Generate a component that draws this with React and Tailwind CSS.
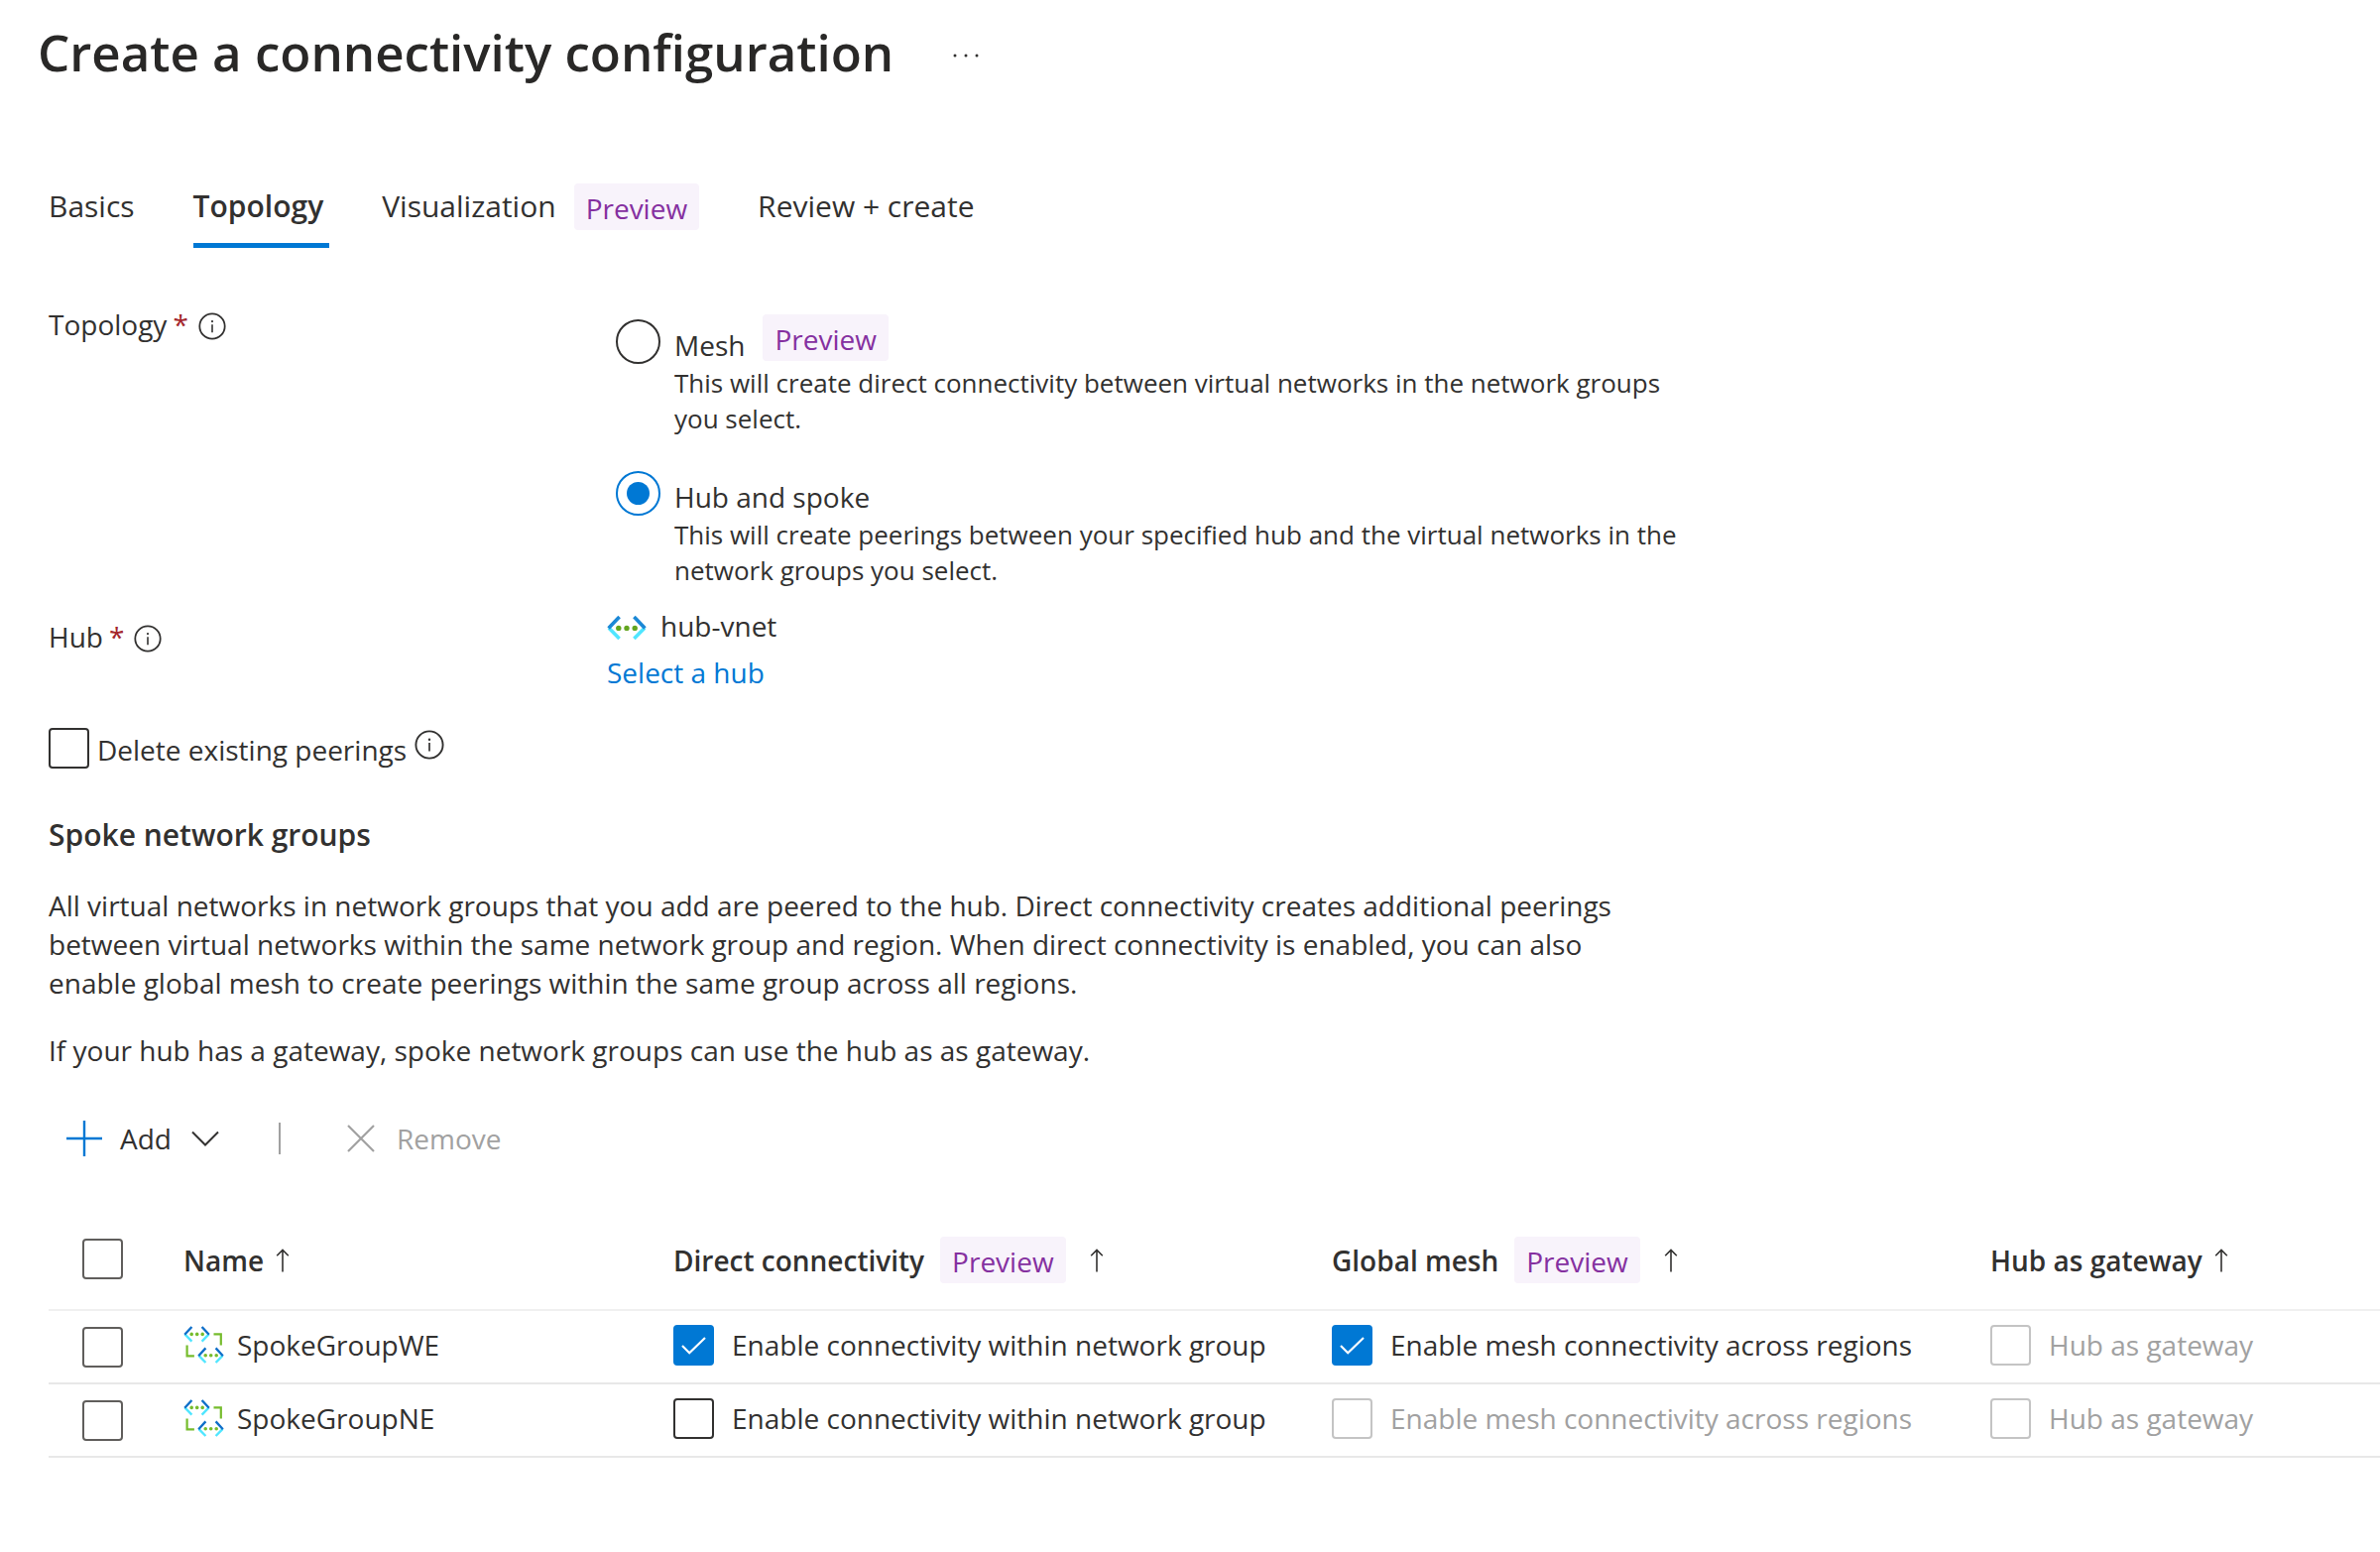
import React, { useState } from "react";

function Preview() {
  return (
    <span className="flex h-[47px] items-center rounded-[4px] bg-[#f8f3fb] px-3 pt-[3px] text-[28px] leading-[40px] font-normal text-[#8530a0]">
      Preview
    </span>
  );
}

function InfoIcon({ className }) {
  return (
    <svg viewBox="0 0 30 30" className={className} fill="none" stroke="#323130" aria-hidden="true">
      <circle cx="15" cy="15" r="13.6" strokeWidth="1.9" />
      <path d="M15 13v8.6" strokeWidth="1.7" />
      <circle cx="15" cy="9.7" r="1.2" fill="#323130" stroke="none" />
    </svg>
  );
}

function ArrowUp() {
  return (
    <svg viewBox="0 0 14 24" className="h-6 w-[14px] shrink-0" fill="none" stroke="#323130" strokeWidth="1.6" aria-hidden="true">
      <path d="M7 23.5V1.5M1.2 7.2 7 1.4l5.8 5.8" />
    </svg>
  );
}

function VnetIcon() {
  return (
    <svg viewBox="0 0 40 26" className="mt-1 h-[26px] w-10 shrink-0" fill="none" aria-hidden="true">
      <g strokeWidth="3.6">
        <path d="M2 13.2 12.6 24" stroke="#50e6ff" />
        <path d="M38 13.2 27.4 24" stroke="#50e6ff" />
        <path d="M12.6 2 1.6 13.6" stroke="#1b88d6" />
        <path d="M27.4 2l11 11.6" stroke="#1b88d6" />
      </g>
      <g fill="#63a51f">
        <circle cx="11.8" cy="13.4" r="2.7" />
        <circle cx="20" cy="13.4" r="2.7" />
        <circle cx="28.2" cy="13.4" r="2.7" />
      </g>
    </svg>
  );
}

function Chevrons() {
  return (
    <>
      <g strokeWidth="2.4">
        <path d="M1.4 8.4 8.4 15.6M25.6 8.4l-7 7.2" stroke="#50e6ff" />
        <path d="M8.4 1 1.2 8.8M18.6 1l7.2 7.8" stroke="#0f6fc9" />
      </g>
      <g fill="#76bc2d">
        <circle cx="8.2" cy="8.4" r="1.8" />
        <circle cx="13.7" cy="8.4" r="1.8" />
        <circle cx="19.2" cy="8.4" r="1.8" />
      </g>
    </>
  );
}

function GroupIcon() {
  return (
    <svg viewBox="0 0 41 38" className="h-[38px] w-[41px] shrink-0" fill="none" aria-hidden="true">
      <path d="M30.5 8.4h7.3v11" stroke="#76bc2d" strokeWidth="2.2" />
      <path d="M3.6 19.5v10.8h7.3" stroke="#76bc2d" strokeWidth="2.2" />
      <Chevrons />
      <g transform="translate(14 21.4)">
        <Chevrons />
      </g>
    </svg>
  );
}

function Check({ id, checked, onChange, disabled, label, soft }) {
  return (
    <span className="grid size-[41px] shrink-0">
      <input
        id={id}
        type="checkbox"
        aria-label={label}
        checked={checked}
        disabled={disabled}
        onChange={onChange}
        className={
          "col-start-1 row-start-1 size-[41px] appearance-none rounded-[4px] border-2 bg-white checked:border-[#0078d4] checked:bg-[#0078d4] disabled:border-[#c4c4c4] " +
          (soft ? "border-[#605e5c]" : "border-[#323130]")
        }
      />
      {checked && (
        <svg viewBox="0 0 41 41" className="pointer-events-none col-start-1 row-start-1 size-[41px]" fill="none" stroke="#fff" strokeWidth="2.2" aria-hidden="true">
          <path d="M9 21l7.2 7.2L32 13" />
        </svg>
      )}
    </span>
  );
}

function CheckField({ id, label, checked, disabled, onChange }) {
  return (
    <div className="flex items-center gap-[18px]">
      <Check id={id} checked={checked} disabled={disabled} onChange={onChange} />
      <label htmlFor={id} className={"whitespace-nowrap " + (disabled ? "text-[#a1a1a1]" : "")}>
        {label}
      </label>
    </div>
  );
}

function TopologyOption({ id, label, preview, description, checked, onChange }) {
  return (
    <div className="flex gap-[14px]">
      <input
        id={id}
        type="radio"
        name="topology"
        checked={checked}
        onChange={onChange}
        className="mt-[5px] size-[45px] shrink-0 appearance-none rounded-full border-2 border-[#323130] bg-white bg-clip-content p-[9px] checked:border-[#0078d4] checked:bg-[#0078d4]"
      />
      <div>
        <div className="flex h-[51px] gap-[18px]">
          <label htmlFor={id} className="self-end">{label}</label>
          {preview && <Preview />}
        </div>
        <p className="max-w-[1030px] text-[26px] leading-[36px]">{description}</p>
      </div>
    </div>
  );
}

function FieldLabel({ children }) {
  return (
    <div className="flex items-center">
      <span>{children}</span>
      <span className="ml-[6px] text-[#a4262c]">*</span>
      <InfoIcon className="mt-1 ml-[10px] size-7" />
    </div>
  );
}

const tabs = [{ name: "Basics" }, { name: "Topology" }, { name: "Visualization", preview: true }, { name: "Review + create" }];

const columns = [
  { name: "Name" },
  { name: "Direct connectivity", preview: true },
  { name: "Global mesh", preview: true },
  { name: "Hub as gateway" },
];

export default function App() {
  const [tab, setTab] = useState("Topology");
  const [topology, setTopology] = useState("hub");
  const [deletePeerings, setDeletePeerings] = useState(false);
  const [selected, setSelected] = useState([]);
  const [groups, setGroups] = useState([
    { name: "SpokeGroupWE", direct: true, mesh: true },
    { name: "SpokeGroupNE", direct: false, mesh: false },
  ]);

  const update = (name, change) => setGroups(groups.map((g) => (g.name === name ? { ...g, ...change } : g)));
  const toggle = (name) => setSelected(selected.includes(name) ? selected.filter((n) => n !== name) : [...selected, name]);
  const all = selected.length === groups.length;

  return (
    <main className="min-h-screen overflow-x-hidden bg-white pt-4 font-['Segoe_UI','Open_Sans',sans-serif] text-[28px] leading-[40px] text-[#323130]">
      <header className="flex items-center gap-[60px] pl-[38px]">
        <h1 className="text-[51px] leading-[72px] font-semibold text-[#292827]">Create a connectivity configuration</h1>
        <button type="button" aria-label="More actions" className="pt-2">
          <svg viewBox="0 0 26 6" className="h-[6px] w-[26px]" fill="#323130" aria-hidden="true">
            <circle cx="2" cy="3" r="1.5" />
            <circle cx="13" cy="3" r="1.5" />
            <circle cx="24" cy="3" r="1.5" />
          </svg>
        </button>
      </header>

      <div className="pl-[49px]">
        <div role="tablist" className="mt-24 flex gap-[53px] text-[30px]">
          {tabs.map((t) => (
            <button
              key={t.name}
              type="button"
              role="tab"
              aria-selected={t.name === tab}
              onClick={() => setTab(t.name)}
              className={
                "flex h-[66px] items-start border-b-[5px] pr-[6px] " +
                (t.name === tab ? "border-[#0078d4] font-semibold" : "border-transparent")
              }
            >
              <span className="flex h-12 items-center gap-[18px]">
                {t.name}
                {t.preview && <Preview />}
              </span>
            </button>
          ))}
        </div>

        <div className="mt-[57px] flex">
          <div className="w-[563px] shrink-0">
            <FieldLabel>Topology</FieldLabel>
          </div>
          <div role="radiogroup" aria-label="Topology" className="flex flex-col gap-[30px] pt-[10px] pl-[9px]">
            <TopologyOption
              id="mesh"
              label="Mesh"
              preview
              description="This will create direct connectivity between virtual networks in the network groups you select."
              checked={topology === "mesh"}
              onChange={() => setTopology("mesh")}
            />
            <TopologyOption
              id="hub"
              label="Hub and spoke"
              description="This will create peerings between your specified hub and the virtual networks in the network groups you select."
              checked={topology === "hub"}
              onChange={() => setTopology("hub")}
            />
          </div>
        </div>

        <div className="mt-[18px] flex">
          <div className="w-[563px] shrink-0 pt-[11px]">
            <FieldLabel>Hub</FieldLabel>
          </div>
          <div className="flex flex-col items-start gap-[7px]">
            <div className="flex items-center gap-[14px]">
              <VnetIcon />
              hub-vnet
            </div>
            <a href="#hub" className="text-[#0078d4]">Select a hub</a>
          </div>
        </div>

        <div className="mt-9 flex h-[42px] items-start">
          <Check id="delete-peerings" checked={deletePeerings} onChange={() => setDeletePeerings(!deletePeerings)} />
          <label htmlFor="delete-peerings" className="mt-[2px] ml-2">Delete existing peerings</label>
          <InfoIcon className="mt-[2px] ml-2 size-[30px]" />
        </div>

        <h2 className="mt-[46px] text-[30px] leading-[40px] font-semibold">Spoke network groups</h2>
        <p className="mt-8 max-w-[1580px] leading-[39px]">
          All virtual networks in network groups that you add are peered to the hub. Direct connectivity creates additional
          peerings between virtual networks within the same network group and region. When direct connectivity is enabled, you
          can also enable global mesh to create peerings within the same group across all regions.
        </p>
        <p className="mt-[29px] leading-[39px]">If your hub has a gateway, spoke network groups can use the hub as as gateway.</p>

        <div role="toolbar" aria-label="Network groups" className="mt-[49px] flex items-center pl-[18px]">
          <button type="button" className="flex items-center">
            <svg viewBox="0 0 36 36" className="size-9" fill="none" stroke="#0078d4" strokeWidth="2.4" aria-hidden="true">
              <path d="M18 0v36M0 18h36" />
            </svg>
            <span className="ml-[18px]">Add</span>
            <svg viewBox="0 0 28 16" className="ml-5 h-4 w-7" fill="none" stroke="#323130" strokeWidth="2" aria-hidden="true">
              <path d="M1 1.5l13 13 13-13" />
            </svg>
          </button>
          <span className="ml-[60px] h-8 w-[2px] bg-[#a1a1a1]" />
          <button type="button" disabled className="ml-[67px] flex items-center gap-[22px] text-[#a1a1a1]">
            <svg viewBox="0 0 28 28" className="size-7" fill="none" stroke="currentColor" strokeWidth="2.2" aria-hidden="true">
              <path d="M1 1l26 26M27 1 1 27" />
            </svg>
            Remove
          </button>
        </div>

        <table className="mt-[51px] w-full table-fixed border-collapse text-left">
          <thead>
            <tr className="h-[102px] border-b-2 border-[#f0f0f0]">
              <th className="w-[136px] p-0 pl-[34px]">
                <Check id="all" soft label="Select all" checked={all} onChange={() => setSelected(all ? [] : groups.map((g) => g.name))} />
              </th>
              {columns.map((c) => (
                <th
                  key={c.name}
                  className={
                    "p-0 pt-[2px] font-semibold " +
                    (c.preview ? "w-[664px]" : c.name === "Name" ? "w-[494px]" : "")
                  }
                >
                  <button type="button" className="flex items-center gap-3">
                    <span className="flex items-center gap-4 whitespace-nowrap">
                      {c.name}
                      {c.preview && <span className="mr-3"><Preview /></span>}
                    </span>
                    <ArrowUp />
                  </button>
                </th>
              ))}
            </tr>
          </thead>
          <tbody>
            {groups.map((g) => (
              <tr key={g.name} className="h-[74px] border-b-2 border-[#e8e8e8]">
                <td className="p-0 pl-[34px]">
                  <Check id={g.name} soft label={"Select " + g.name} checked={selected.includes(g.name)} onChange={() => toggle(g.name)} />
                </td>
                <td className="p-0 pb-1">
                  <div className="flex items-center gap-[13px]">
                    <GroupIcon />
                    {g.name}
                  </div>
                </td>
                <td className="p-0 pb-1">
                  <CheckField
                    id={g.name + "-direct"}
                    label="Enable connectivity within network group"
                    checked={g.direct}
                    onChange={() => update(g.name, { direct: !g.direct, mesh: false })}
                  />
                </td>
                <td className="p-0 pb-1">
                  <CheckField
                    id={g.name + "-mesh"}
                    label="Enable mesh connectivity across regions"
                    checked={g.mesh}
                    disabled={!g.direct}
                    onChange={() => update(g.name, { mesh: !g.mesh })}
                  />
                </td>
                <td className="p-0 pb-1">
                  <CheckField id={g.name + "-gateway"} label="Hub as gateway" checked={false} disabled onChange={() => {}} />
                </td>
              </tr>
            ))}
          </tbody>
        </table>
      </div>
    </main>
  );
}
